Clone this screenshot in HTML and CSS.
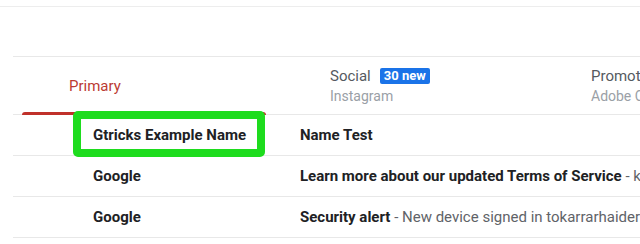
FILE: index.html
```html
<!DOCTYPE html>
<html lang="en">
  <head>
  	<meta charset="utf-8">
  	<title>Inbox</title>
  	<link rel="stylesheet" href="styles.css">
  </head>
<body>

	<div class="topbar"></div>

	<div class="inbox">
		<div class="tabs">
			<div class="tab active">
				<div class="tab-label">Primary</div>
			</div>
			<div class="tab">
				<div class="tab-label">Social <span class="badge">30 new</span></div>
				<div class="tab-sub">Instagram</div>
			</div>
			<div class="tab">
				<div class="tab-label">Promotions</div>
				<div class="tab-sub">Adobe Creative Cloud</div>
			</div>
		</div>

		<div class="row">
			<div class="sender">Gtricks Example Name</div>
			<div class="subject"><b>Name Test</b></div>
		</div>
		<div class="row">
			<div class="sender">Google</div>
			<div class="subject"><b>Learn more about our updated Terms of Service</b> - kalm2020@gmail.com</div>
		</div>
		<div class="row">
			<div class="sender">Google</div>
			<div class="subject"><b>Security alert</b> - New device signed in tokarrarhaider0@gmail.com</div>
		</div>
	</div>

	<!-- 标注框 -->
	<div class="highlight"></div>

</body>
</html>
```

FILE: styles.css
```css
html, body {
  margin: 0;
  padding: 0;
  background: #fff;
  width: 640px;
  height: 244px;
  overflow: hidden;
  font-family: Roboto, "Liberation Sans", sans-serif;
  color: #202124;
}
.topbar {
  height: 6px;
  border-bottom: 1px solid #ededed;
}
.inbox {
  margin-top: 49px;
  margin-left: 13px;
  width: 627px;
  overflow: hidden;
  border-top: 1px solid #e8e8e8;
}
.tabs {
  display: flex;
  height: 57px;
  border-bottom: 1px solid #e8e8e8;
}
.tab {
  position: relative;
  width: 261px;
  flex: none;
  padding-left: 56px;
  box-sizing: border-box;
  display: flex;
  flex-direction: column;
  justify-content: center;
  line-height: 20px;
}
.tab-label {
  font-size: 15px;
  color: #555a5f;
  display: flex;
  align-items: center;
  white-space: nowrap;
}
.tab.active .tab-label {
  color: #bb3a33;
  padding-top: 1px;
}
.tab.active::after {
  content: "";
  position: absolute;
  left: 9px;
  right: 8px;
  bottom: -1px;
  height: 3px;
  background: #c0312a;
  border-radius: 3px 3px 0 0;
}
.tab-sub {
  font-size: 14px;
  color: #9aa0a6;
  white-space: nowrap;
}
.badge {
  margin-left: 9px;
  padding: 0 4px;
  height: 16px;
  line-height: 16px;
  border-radius: 2px;
  background: #1a73e8;
  color: #fff;
  font-size: 13px;
  font-weight: bold;
}
.row {
  display: flex;
  height: 40px;
  line-height: 40px;
  border-bottom: 1px solid #e8e8e8;
  font-size: 15px;
  white-space: nowrap;
}
.sender {
  width: 207px;
  padding-left: 80px;
  flex: none;
  font-weight: bold;
}
.subject {
  color: #5f6368;
}
.subject b {
  color: #202124;
}
.highlight {
  position: absolute;
  left: 73px;
  top: 111px;
  width: 176px;
  height: 30px;
  border: 8px solid #1edc1e;
  border-radius: 5px;
}
```
